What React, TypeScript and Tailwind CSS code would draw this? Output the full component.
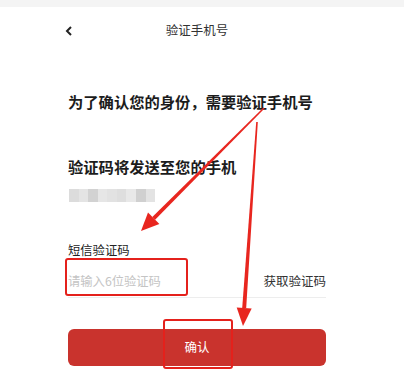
const phoneBlocks = ['#dcdcdc', '#e4e4e4', '#d2d2d2', '#e6e6e6', '#e2e2e2', '#dedede', '#e8e8e8', '#d0d0d0', '#e3e3e3']

function Annotations() {
  return (
    <svg className="pointer-events-none absolute left-0 top-0" width="404" height="380" viewBox="0 0 404 380">
      <polygon points="264.5,108.5 263.5,107.5 152.3,216.9 155.1,219.7" fill="#e8261f" />
      <polygon points="141,231 148,212.6 159.4,224" fill="#e8261f" />
      <polygon points="257.8,122.05 256.2,121.95 242.2,307.9 246.2,308.1" fill="#e8261f" />
      <polygon points="243,326 236.7,307.5 251.7,308.5" fill="#e8261f" />
    </svg>
  )
}

export default function App() {
  return (
    <div
      className="relative h-[380px] w-[404px] overflow-hidden bg-white text-[#222]"
      style={{ fontFamily: '"Noto Sans CJK SC", "Noto Sans", sans-serif' }}
    >
      <div className="h-[7px] bg-[#f4f4f4]" />

      <div className="ml-[68px] w-[258px]">
        <header className="relative flex h-[46px] items-center justify-center">
          <svg className="absolute left-[-3px] top-[19px]" width="8" height="10" viewBox="0 0 8 10">
            <polyline points="6,1 2,5 6,9" fill="none" stroke="#222" strokeWidth="2" />
          </svg>
          <h1 className="text-[12.5px] text-[#333]">验证手机号</h1>
        </header>

        <h2 className="mt-[37px] text-[15.3px] font-semibold leading-[22px] text-[#1c1c1c]">
          为了确认您的身份，需要验证手机号
        </h2>

        <p className="mt-[43px] text-[15.3px] font-semibold leading-[22px] text-[#1c1c1c]">
          验证码将发送至您的手机
        </p>

        <div className="ml-[1px] mt-[12px] flex h-[13px] w-[86px] blur-[0.6px]">
          {phoneBlocks.map((c, i) => (
            <div key={i} className="h-full flex-1" style={{ backgroundColor: c }} />
          ))}
        </div>

        <div className="mt-[39px] text-[12.3px] leading-[18px] text-[#222]">短信验证码</div>

        <div className="flex h-[39px] items-center justify-between border-b border-[#ededed] pt-[6px]">
          <span className="text-[12.3px] text-[#c4c4c4]">请输入6位验证码</span>
          <span className="text-[12.5px] text-[#333]">获取验证码</span>
        </div>

        <button
          type="button"
          className="mt-[31px] flex h-[37px] w-full items-center justify-center rounded-[6px] bg-[#c9332d] text-[12.5px] text-white"
        >
          确认
        </button>
      </div>

      <div className="pointer-events-none absolute left-[65px] top-[258px] h-[38px] w-[123px] rounded-[3px] border-2 border-[#e4211c]" />
      <div className="pointer-events-none absolute left-[163px] top-[319px] h-[50px] w-[70px] rounded-[3px] border-2 border-[#e4211c]" />

      <Annotations />
    </div>
  )
}
